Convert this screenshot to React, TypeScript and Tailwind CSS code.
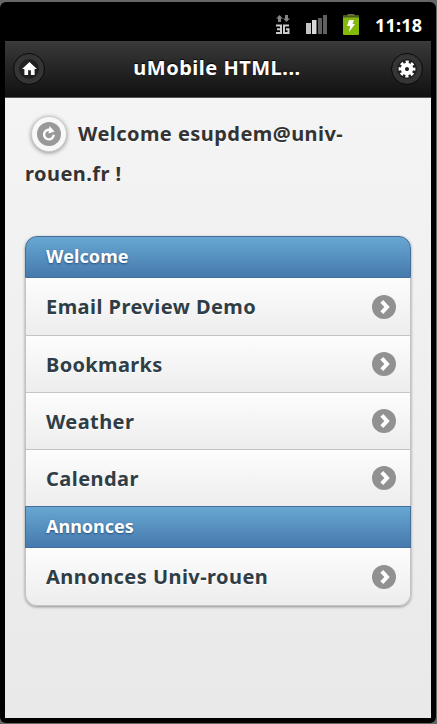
import React from "react";

function Arrow() {
  return (
    <svg width="24" height="24" viewBox="0 0 24 24" className="shrink-0">
      <circle cx="12" cy="12" r="12" fill="#919191" />
      <path d="M9.8 6.4L15 12L9.8 17.6" fill="none" stroke="#fff" strokeWidth="4" />
    </svg>
  );
}

function Row({ label, className, spacing }: { label: string; className: string; spacing: string }) {
  return (
    <div className={`flex items-center justify-between bg-linear-to-b from-[#fdfdfd] to-[#ededed] pl-5 pr-3.5 text-[#2f3e46] [text-shadow:0_1px_0_#fff] ${className}`}>
      <span className={`whitespace-nowrap pt-px text-[20px] leading-6 ${spacing}`}>{label}</span>
      <Arrow />
    </div>
  );
}

function Divider({ label, className }: { label: string; className: string }) {
  return (
    <div className={`flex items-center border border-[#456f9a] bg-linear-to-b from-[#68a7d2] to-[#467aad] pb-0.5 pl-5 text-[18px] leading-6 text-white [text-shadow:0_1px_2px_#254f7a] ${className}`}>
      {label}
    </div>
  );
}

function RoundButton({ children }: { children: React.ReactNode }) {
  return (
    <div className="flex size-8 items-center justify-center rounded-full border border-[#0c0c0c] bg-[#202020] shadow-[inset_0_0_0_5px_#353535,inset_0_1px_1px_#777]">
      {children}
    </div>
  );
}

function StatusBar() {
  return (
    <div className="flex h-[39px] items-center pl-[271px] pt-1.5 text-white">
      <svg width="14" height="20" viewBox="0 0 14 20">
        <path d="M3.5 0L7 3.5H5V7H2V3.5H0ZM9 3.5V0H12V3.5H14L10.5 7L7 3.5Z" fill="#858585" />
        <path d="M0 10.5H5V18H0M1 14.2H5M13 10.5H8V18H12.5V14.2H10" fill="none" stroke="#ccc" strokeWidth="2" />
      </svg>
      <svg width="22" height="19" viewBox="0 0 22 19" className="ml-4">
        <path d="M0 8H5V19H0Z" fill="#c4c4c4" />
        <path d="M6 5H10.5V19H6Z" fill="#d8d8d8" />
        <path d="M12 3H16V19H12ZM17 0H21V19H17Z" fill="#606060" />
      </svg>
      <svg width="16" height="21" viewBox="0 0 16 21" className="ml-[15px]">
        <path d="M4.5 0H11.5V2H4.5Z" fill="#666" />
        <rect x="0" y="1.5" width="16" height="19.5" rx="1" fill="#84b90b" />
        <path d="M0 1.5H16V3.5H0Z" fill="#4a5b20" />
        <path d="M6 6H11L9.5 10H12L6 18L7.2 12H4Z" fill="#fff" />
      </svg>
      <span className="ml-[16px] text-[18px] leading-6 tracking-[0.2px]">11:18</span>
    </div>
  );
}

export default function App() {
  return (
    <div className="h-[724px] w-[437px] bg-[#666] pt-0.5 pb-px pr-px font-['Noto_Sans','Open_Sans',sans-serif] font-bold">
      <div className="flex h-full flex-col rounded-md bg-black pb-[5px] pl-[5px] pr-[5px]">
        <StatusBar />
        <header className="flex h-[57px] shrink-0 items-center justify-between border-b border-t border-b-[#555] border-t-[#3d3d3d] bg-linear-to-b from-[#393939] to-[#111] px-2 pb-0.5">
          <RoundButton>
            <svg width="15" height="13" viewBox="0 0 16 14" fill="#fff">
              <path d="M8 0L16 7.5H13.5V14H9.5V9H6.5V14H2.5V7.5H0Z" />
            </svg>
          </RoundButton>
          <h1 className="whitespace-nowrap pb-px pr-0.5 text-[20px] leading-6 tracking-[0.5px] text-white [text-shadow:0_-1px_1px_#000]">uMobile HTML...</h1>
          <RoundButton>
            <svg width="18" height="18" viewBox="-9 -9 18 18">
              <circle r="4.1" fill="none" stroke="#fff" strokeWidth="4.2" />
              <circle r="7" fill="none" stroke="#fff" strokeWidth="2.8" strokeDasharray="3.1 2.398" strokeDashoffset="1.55" />
            </svg>
          </RoundButton>
        </header>
        <main className="min-h-0 flex-1 bg-linear-to-b from-[#f4f4f4] to-[#e9e9e9] px-5">
          <div className="flex h-[138px] flex-col pt-4 text-[20px] tracking-[0.45px] text-[#333] [text-shadow:0_1px_0_#fff]">
            <div className="flex h-10 items-center pl-1.5">
              <div className="flex size-9 shrink-0 items-center justify-center rounded-full border border-[#ccc] bg-[#f8f8f8] shadow-[0_1px_4px_#0006]">
                <svg width="24" height="24" viewBox="0 0 24 24">
                  <circle cx="12" cy="12" r="12" fill="#999" />
                  <path d="M16.7 12.8A4.8 4.8 0 1 1 13 7.9" fill="none" stroke="#fff" strokeWidth="2.4" />
                  <path d="M12.5 4L17.5 9.5L11.5 11.5Z" fill="#fff" />
                </svg>
              </div>
              <span className="ml-[11px] whitespace-nowrap">Welcome esupdem@univ-</span>
            </div>
            <span className="leading-10">rouen.fr !</span>
          </div>
          <section className="flex h-[370px] w-[386px] flex-col rounded-[12px] shadow-[0_1px_3px_#0006]">
            <Divider label="Welcome" className="h-[42px] rounded-t-[12px] tracking-[0.1px]" />
            <Row label="Email Preview Demo" className="h-[58px] border-x border-b border-[#c4c4c4]" spacing="tracking-[0.45px]" />
            <Row label="Bookmarks" className="h-[57px] border-x border-b border-[#c4c4c4]" spacing="tracking-[0.35px]" />
            <Row label="Weather" className="h-[57px] border-x border-b border-[#c4c4c4]" spacing="tracking-[0.4px]" />
            <Row label="Calendar" className="h-[56px] border-x border-[#c4c4c4]" spacing="tracking-[0.45px]" />
            <Divider label="Annonces" className="h-[42px]" />
            <Row label="Annonces Univ-rouen" className="h-[58px] rounded-b-[12px] border-x border-b border-[#c4c4c4]" spacing="tracking-[0.45px]" />
          </section>
        </main>
      </div>
    </div>
  );
}
